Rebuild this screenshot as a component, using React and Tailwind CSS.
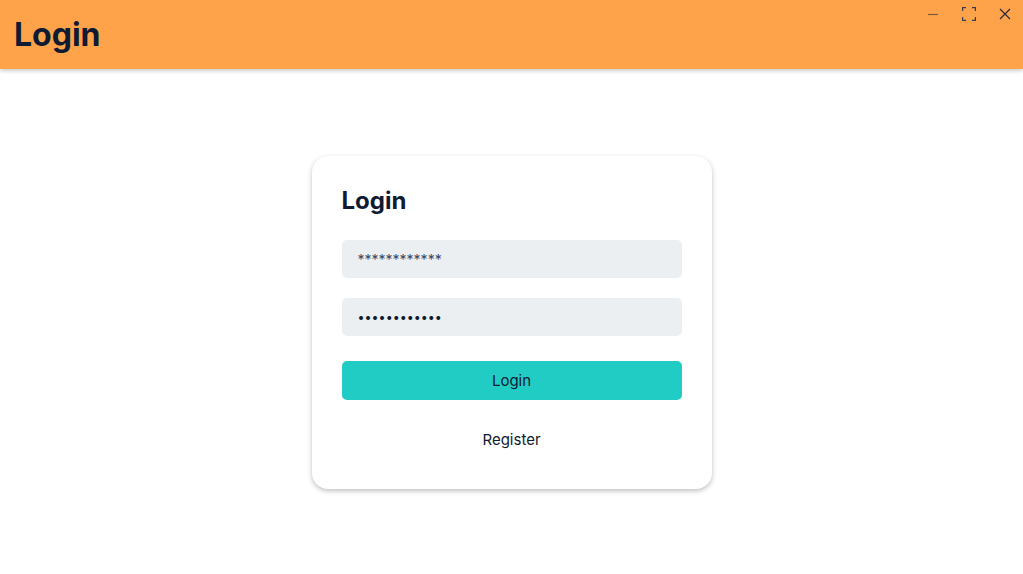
import { useState } from "react";

const App = () => {
  const [username, setUsername] = useState("************");
  const [password, setPassword] = useState("************");

  return (
    <div className="min-h-screen bg-white font-['Inter',sans-serif] text-[#0f1a33]">
      <header className="relative h-[69px] bg-[#ffa34b] shadow-[0_2px_4px_rgba(0,0,0,0.2)] flex items-center px-[14px]">
        <h1 className="text-[32px] font-bold leading-none">Login</h1>

        <div className="absolute top-0 right-0 flex items-center h-[28px]">
          <button className="w-[36px] h-[28px] flex items-center justify-center">
            <svg width="12" height="12" viewBox="0 0 12 12">
              <path d="M1 6.5h10" stroke="#7a5a3a" strokeWidth="1.2" />
            </svg>
          </button>
          <button className="w-[36px] h-[28px] flex items-center justify-center">
            <svg width="14" height="14" viewBox="0 0 14 14" fill="none" stroke="#3a3a4a" strokeWidth="1.2">
              <path d="M0.6 4V0.6H4 M10 0.6h3.4V4 M13.4 10v3.4H10 M4 13.4H0.6V10" />
            </svg>
          </button>
          <button className="w-[36px] h-[28px] flex items-center justify-center">
            <svg width="12" height="12" viewBox="0 0 12 12" fill="none" stroke="#2a2a3a" strokeWidth="1.2">
              <path d="M1 1l10 10M11 1L1 11" />
            </svg>
          </button>
        </div>
      </header>

      <main className="flex justify-center pt-[87px]">
        <div className="w-[400px] bg-white rounded-[16px] shadow-[0_2px_5px_rgba(0,0,0,0.25)] px-[30px] pt-[30px] pb-[30px]">
          <h2 className="text-[24px] font-bold leading-[30px] mb-[24px]">Login</h2>

          <form className="flex flex-col" onSubmit={(e) => e.preventDefault()}>
            <input
              className="h-[38px] rounded-[5px] bg-[#eceff2] px-[16px] text-[14px] text-[#3a4660] outline-none"
              type="text"
              value={username}
              onChange={(e) => setUsername(e.target.value)}
            />
            <input
              className="h-[38px] mt-[20px] rounded-[5px] bg-[#eceff2] px-[16px] text-[12.5px] text-[#0f1a33] outline-none"
              type="password"
              value={password}
              onChange={(e) => setPassword(e.target.value)}
            />
            <button
              type="submit"
              className="h-[39px] mt-[25px] rounded-[5px] bg-[#20ccc4] text-[15px] leading-[39px] text-[#0f1a33]"
            >
              Login
            </button>
            <button type="button" className="mt-[22px] h-[37px] text-[15px] text-[#0f1a33]">
              Register
            </button>
          </form>
        </div>
      </main>
    </div>
  );
};

export default App;
